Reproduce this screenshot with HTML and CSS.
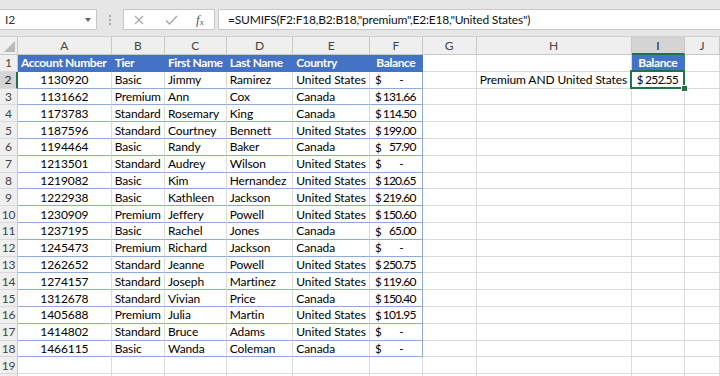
FILE: index.html
```html
<!DOCTYPE html>
<html>
<head>
<meta charset="utf-8">
<title>Sheet</title>
<link rel="stylesheet" href="styles.css">
</head>
<body>
<div class="app">
  <div class="fbar">
    <div class="namebox"><span>I2</span><span class="caret"></span></div>
    <div class="grip"><i></i><i></i><i></i></div>
    <div class="fxbox">
      <svg class="ico-x" width="10" height="10" viewBox="0 0 10 10"><path d="M1 1L9 9M9 1L1 9" stroke="#a6a6a6" stroke-width="1.2" fill="none"/></svg>
      <svg class="ico-ok" width="13" height="10" viewBox="0 0 13 10"><path d="M1 5.5L4.5 9L12 1" stroke="#a6a6a6" stroke-width="1.3" fill="none"/></svg>
      <span class="fx">f<sub>x</sub></span>
    </div>
    <div class="formula">=SUMIFS(F2:F18,B2:B18,"premium",E2:E18,"United States")</div>
  </div>
  <div class="sheet">
    <div class="r colhdr"><span class="corner"><i></i></span><span>A</span><span>B</span><span>C</span><span>D</span><span>E</span><span>F</span><span>G</span><span>H</span><span class="csel">I</span><span>J</span></div>
    <div class="r"><span class="h">1</span><span class="hd">Account Number</span><span class="hd">Tier</span><span class="hd">First Name</span><span class="hd">Last Name</span><span class="hd">Country</span><span class="hd n">Balance</span><span></span><span></span><span class="hd n">Balance</span><span></span></div>
    <div class="r"><span class="h rsel">2</span><span class="t n">1130920</span><span class="t">Basic</span><span class="t">Jimmy</span><span class="t">Ramirez</span><span class="t">United States</span><span class="t fr acc"><span class="cur">$</span><span class="dash">-</span></span><span></span><span>Premium AND United States</span><span class="acc sel"><span class="cur">$</span><span class="amt">252.55</span></span><span></span></div>
    <div class="r"><span class="h">3</span><span class="t n">1131662</span><span class="t">Premium</span><span class="t">Ann</span><span class="t">Cox</span><span class="t">Canada</span><span class="t fr acc"><span class="cur">$</span><span class="amt">131.66</span></span><span></span><span></span><span></span><span></span></div>
    <div class="r"><span class="h">4</span><span class="t n">1173783</span><span class="t">Standard</span><span class="t">Rosemary</span><span class="t">King</span><span class="t">Canada</span><span class="t fr acc"><span class="cur">$</span><span class="amt">114.50</span></span><span></span><span></span><span></span><span></span></div>
    <div class="r"><span class="h">5</span><span class="t n">1187596</span><span class="t">Standard</span><span class="t">Courtney</span><span class="t">Bennett</span><span class="t">United States</span><span class="t fr acc"><span class="cur">$</span><span class="amt">199.00</span></span><span></span><span></span><span></span><span></span></div>
    <div class="r"><span class="h">6</span><span class="t n">1194464</span><span class="t">Basic</span><span class="t">Randy</span><span class="t">Baker</span><span class="t">Canada</span><span class="t fr acc"><span class="cur">$</span><span class="amt">57.90</span></span><span></span><span></span><span></span><span></span></div>
    <div class="r"><span class="h">7</span><span class="t n">1213501</span><span class="t">Standard</span><span class="t">Audrey</span><span class="t">Wilson</span><span class="t">United States</span><span class="t fr acc"><span class="cur">$</span><span class="dash">-</span></span><span></span><span></span><span></span><span></span></div>
    <div class="r"><span class="h">8</span><span class="t n">1219082</span><span class="t">Basic</span><span class="t">Kim</span><span class="t">Hernandez</span><span class="t">United States</span><span class="t fr acc"><span class="cur">$</span><span class="amt">120.65</span></span><span></span><span></span><span></span><span></span></div>
    <div class="r"><span class="h">9</span><span class="t n">1222938</span><span class="t">Basic</span><span class="t">Kathleen</span><span class="t">Jackson</span><span class="t">United States</span><span class="t fr acc"><span class="cur">$</span><span class="amt">219.60</span></span><span></span><span></span><span></span><span></span></div>
    <div class="r"><span class="h">10</span><span class="t n">1230909</span><span class="t">Premium</span><span class="t">Jeffery</span><span class="t">Powell</span><span class="t">United States</span><span class="t fr acc"><span class="cur">$</span><span class="amt">150.60</span></span><span></span><span></span><span></span><span></span></div>
    <div class="r"><span class="h">11</span><span class="t n">1237195</span><span class="t">Basic</span><span class="t">Rachel</span><span class="t">Jones</span><span class="t">Canada</span><span class="t fr acc"><span class="cur">$</span><span class="amt">65.00</span></span><span></span><span></span><span></span><span></span></div>
    <div class="r"><span class="h">12</span><span class="t n">1245473</span><span class="t">Premium</span><span class="t">Richard</span><span class="t">Jackson</span><span class="t">Canada</span><span class="t fr acc"><span class="cur">$</span><span class="dash">-</span></span><span></span><span></span><span></span><span></span></div>
    <div class="r"><span class="h">13</span><span class="t n">1262652</span><span class="t">Standard</span><span class="t">Jeanne</span><span class="t">Powell</span><span class="t">United States</span><span class="t fr acc"><span class="cur">$</span><span class="amt">250.75</span></span><span></span><span></span><span></span><span></span></div>
    <div class="r"><span class="h">14</span><span class="t n">1274157</span><span class="t">Standard</span><span class="t">Joseph</span><span class="t">Martinez</span><span class="t">United States</span><span class="t fr acc"><span class="cur">$</span><span class="amt">119.60</span></span><span></span><span></span><span></span><span></span></div>
    <div class="r"><span class="h">15</span><span class="t n">1312678</span><span class="t">Standard</span><span class="t">Vivian</span><span class="t">Price</span><span class="t">Canada</span><span class="t fr acc"><span class="cur">$</span><span class="amt">150.40</span></span><span></span><span></span><span></span><span></span></div>
    <div class="r"><span class="h">16</span><span class="t n">1405688</span><span class="t">Premium</span><span class="t">Julia</span><span class="t">Martin</span><span class="t">United States</span><span class="t fr acc"><span class="cur">$</span><span class="amt">101.95</span></span><span></span><span></span><span></span><span></span></div>
    <div class="r"><span class="h">17</span><span class="t n">1414802</span><span class="t">Standard</span><span class="t">Bruce</span><span class="t">Adams</span><span class="t">United States</span><span class="t fr acc"><span class="cur">$</span><span class="dash">-</span></span><span></span><span></span><span></span><span></span></div>
    <div class="r"><span class="h">18</span><span class="t n">1466115</span><span class="t">Basic</span><span class="t">Wanda</span><span class="t">Coleman</span><span class="t">Canada</span><span class="t fr acc"><span class="cur">$</span><span class="dash">-</span></span><span></span><span></span><span></span><span></span></div>
    <div class="r"><span class="h">19</span><span></span><span></span><span></span><span></span><span></span><span></span><span></span><span></span><span></span><span></span></div>
    <div class="r"><span class="h"></span><span></span><span></span><span></span><span></span><span></span><span></span><span></span><span></span><span></span><span></span></div>
  </div>
</div>
</body>
</html>
```

FILE: styles.css
```css
html, body {
  margin: 0;
  padding: 0;
  background: #ffffff;
}
body {
  font-family: Lato, "Liberation Sans", sans-serif;
  color: #000;
}
.app {
  width: 720px;
  height: 376px;
  overflow: hidden;
}

/* formula bar */
.fbar {
  height: 37px;
  box-sizing: border-box;
  background: #e6e6e6;
  border-bottom: 1px solid #d0d0d0;
  display: flex;
  align-items: flex-start;
  padding-top: 9px;
}
.namebox {
  width: 97px;
  height: 21px;
  box-sizing: border-box;
  background: #fff;
  border: 1px solid #c8c8c8;
  border-left: none;
  display: flex;
  align-items: center;
  justify-content: space-between;
  padding: 0 5px 0 5px;
  font-size: 12px;
  color: #333;
}
.caret {
  width: 0;
  height: 0;
  border-left: 3.5px solid transparent;
  border-right: 3.5px solid transparent;
  border-top: 4px solid #666;
}
.grip {
  width: 26px;
  height: 21px;
  display: flex;
  flex-direction: column;
  align-items: center;
  justify-content: center;
  gap: 2px;
}
.grip i {
  width: 2px;
  height: 2px;
  background: #a8a8a8;
}
.fxbox {
  width: 92px;
  height: 21px;
  box-sizing: border-box;
  background: #fff;
  border: 1px solid #c8c8c8;
  display: flex;
  align-items: center;
  padding-left: 10px;
}
.ico-ok {
  margin-left: 21px;
}
.fx {
  margin-left: 18px;
  font-family: "Liberation Serif", serif;
  font-style: italic;
  font-size: 13px;
  color: #555;
  line-height: 1;
}
.fx sub {
  font-size: 9px;
  vertical-align: -1px;
}
.formula {
  flex: 1;
  margin-left: 3px;
  height: 21px;
  box-sizing: border-box;
  background: #fff;
  border: 1px solid #c8c8c8;
  border-right: none;
  padding-left: 9px;
  font-size: 12px;
  letter-spacing: -0.2px;
  line-height: 19px;
  white-space: nowrap;
  color: #111;
}

/* sheet grid */
.r {
  display: grid;
  grid-template-columns: 18px 93.7px 53.3px 61.7px 66.6px 76.7px 52.7px 54px 155px 53.3px 1fr;
  height: 16.8px;
}
.r > span {
  box-sizing: border-box;
  border-right: 1px solid #dadada;
  border-bottom: 1px solid #dadada;
  display: flex;
  align-items: center;
  padding: 1px 3px 0 3px;
  font-size: 12px;
  letter-spacing: -0.1px;
  white-space: nowrap;
  overflow: visible;
  line-height: 1;
  min-width: 0;
}
.colhdr {
  height: 18px;
  background: #efefef;
}
.colhdr > span {
  justify-content: center;
  color: #444;
  font-size: 12px;
  border-right-color: #c8c8c8;
  border-bottom-color: #c8c8c8;
}
.colhdr > .csel {
  background: #d4d4d4;
  color: #222;
  border-bottom: 2px solid #217346;
}
.corner {
  align-items: flex-end !important;
  justify-content: flex-end !important;
  padding: 0 2px 2px 0 !important;
}
.corner i {
  width: 0;
  height: 0;
  border-left: 11px solid transparent;
  border-bottom: 11px solid #b9b9b9;
}
.r > .h {
  background: #efefef;
  color: #444;
  font-size: 12px;
  justify-content: center;
  padding: 1px 0 0 0;
  border-right-color: #c8c8c8;
  border-bottom-color: #dadada;
}
.r > .rsel {
  background: #d4d4d4;
  color: #222;
  border-right: 2px solid #217346;
}

/* table */
.r > .hd {
  background: #4472c4;
  color: #fff;
  font-weight: 700;
  letter-spacing: -0.4px;
  border-right-color: #4472c4;
  border-bottom-color: #4472c4;
}
.r > .t {
  border-bottom-color: #8eaadb;
}
.r > .fr {
  border-right-color: #8eaadb;
}
.r > .n {
  justify-content: center;
}
.r > .acc {
  justify-content: space-between;
  padding: 1px 6px 0 5px;
}
.cur {
  font-size: 11.5px;
}
.amt {
  letter-spacing: -0.8px;
}
.dash {
  margin-right: 12px;
}
.r > .sel {
  position: relative;
  border-right-color: transparent;
}
.sel::after {
  content: "";
  position: absolute;
  left: -2px;
  top: -2px;
  right: -1px;
  bottom: -1px;
  border: 2px solid #217346;
  pointer-events: none;
}
.sel::before {
  content: "";
  position: absolute;
  right: -4px;
  bottom: -4px;
  width: 5px;
  height: 5px;
  background: #217346;
  border: 1px solid #fff;
  z-index: 2;
}
```
